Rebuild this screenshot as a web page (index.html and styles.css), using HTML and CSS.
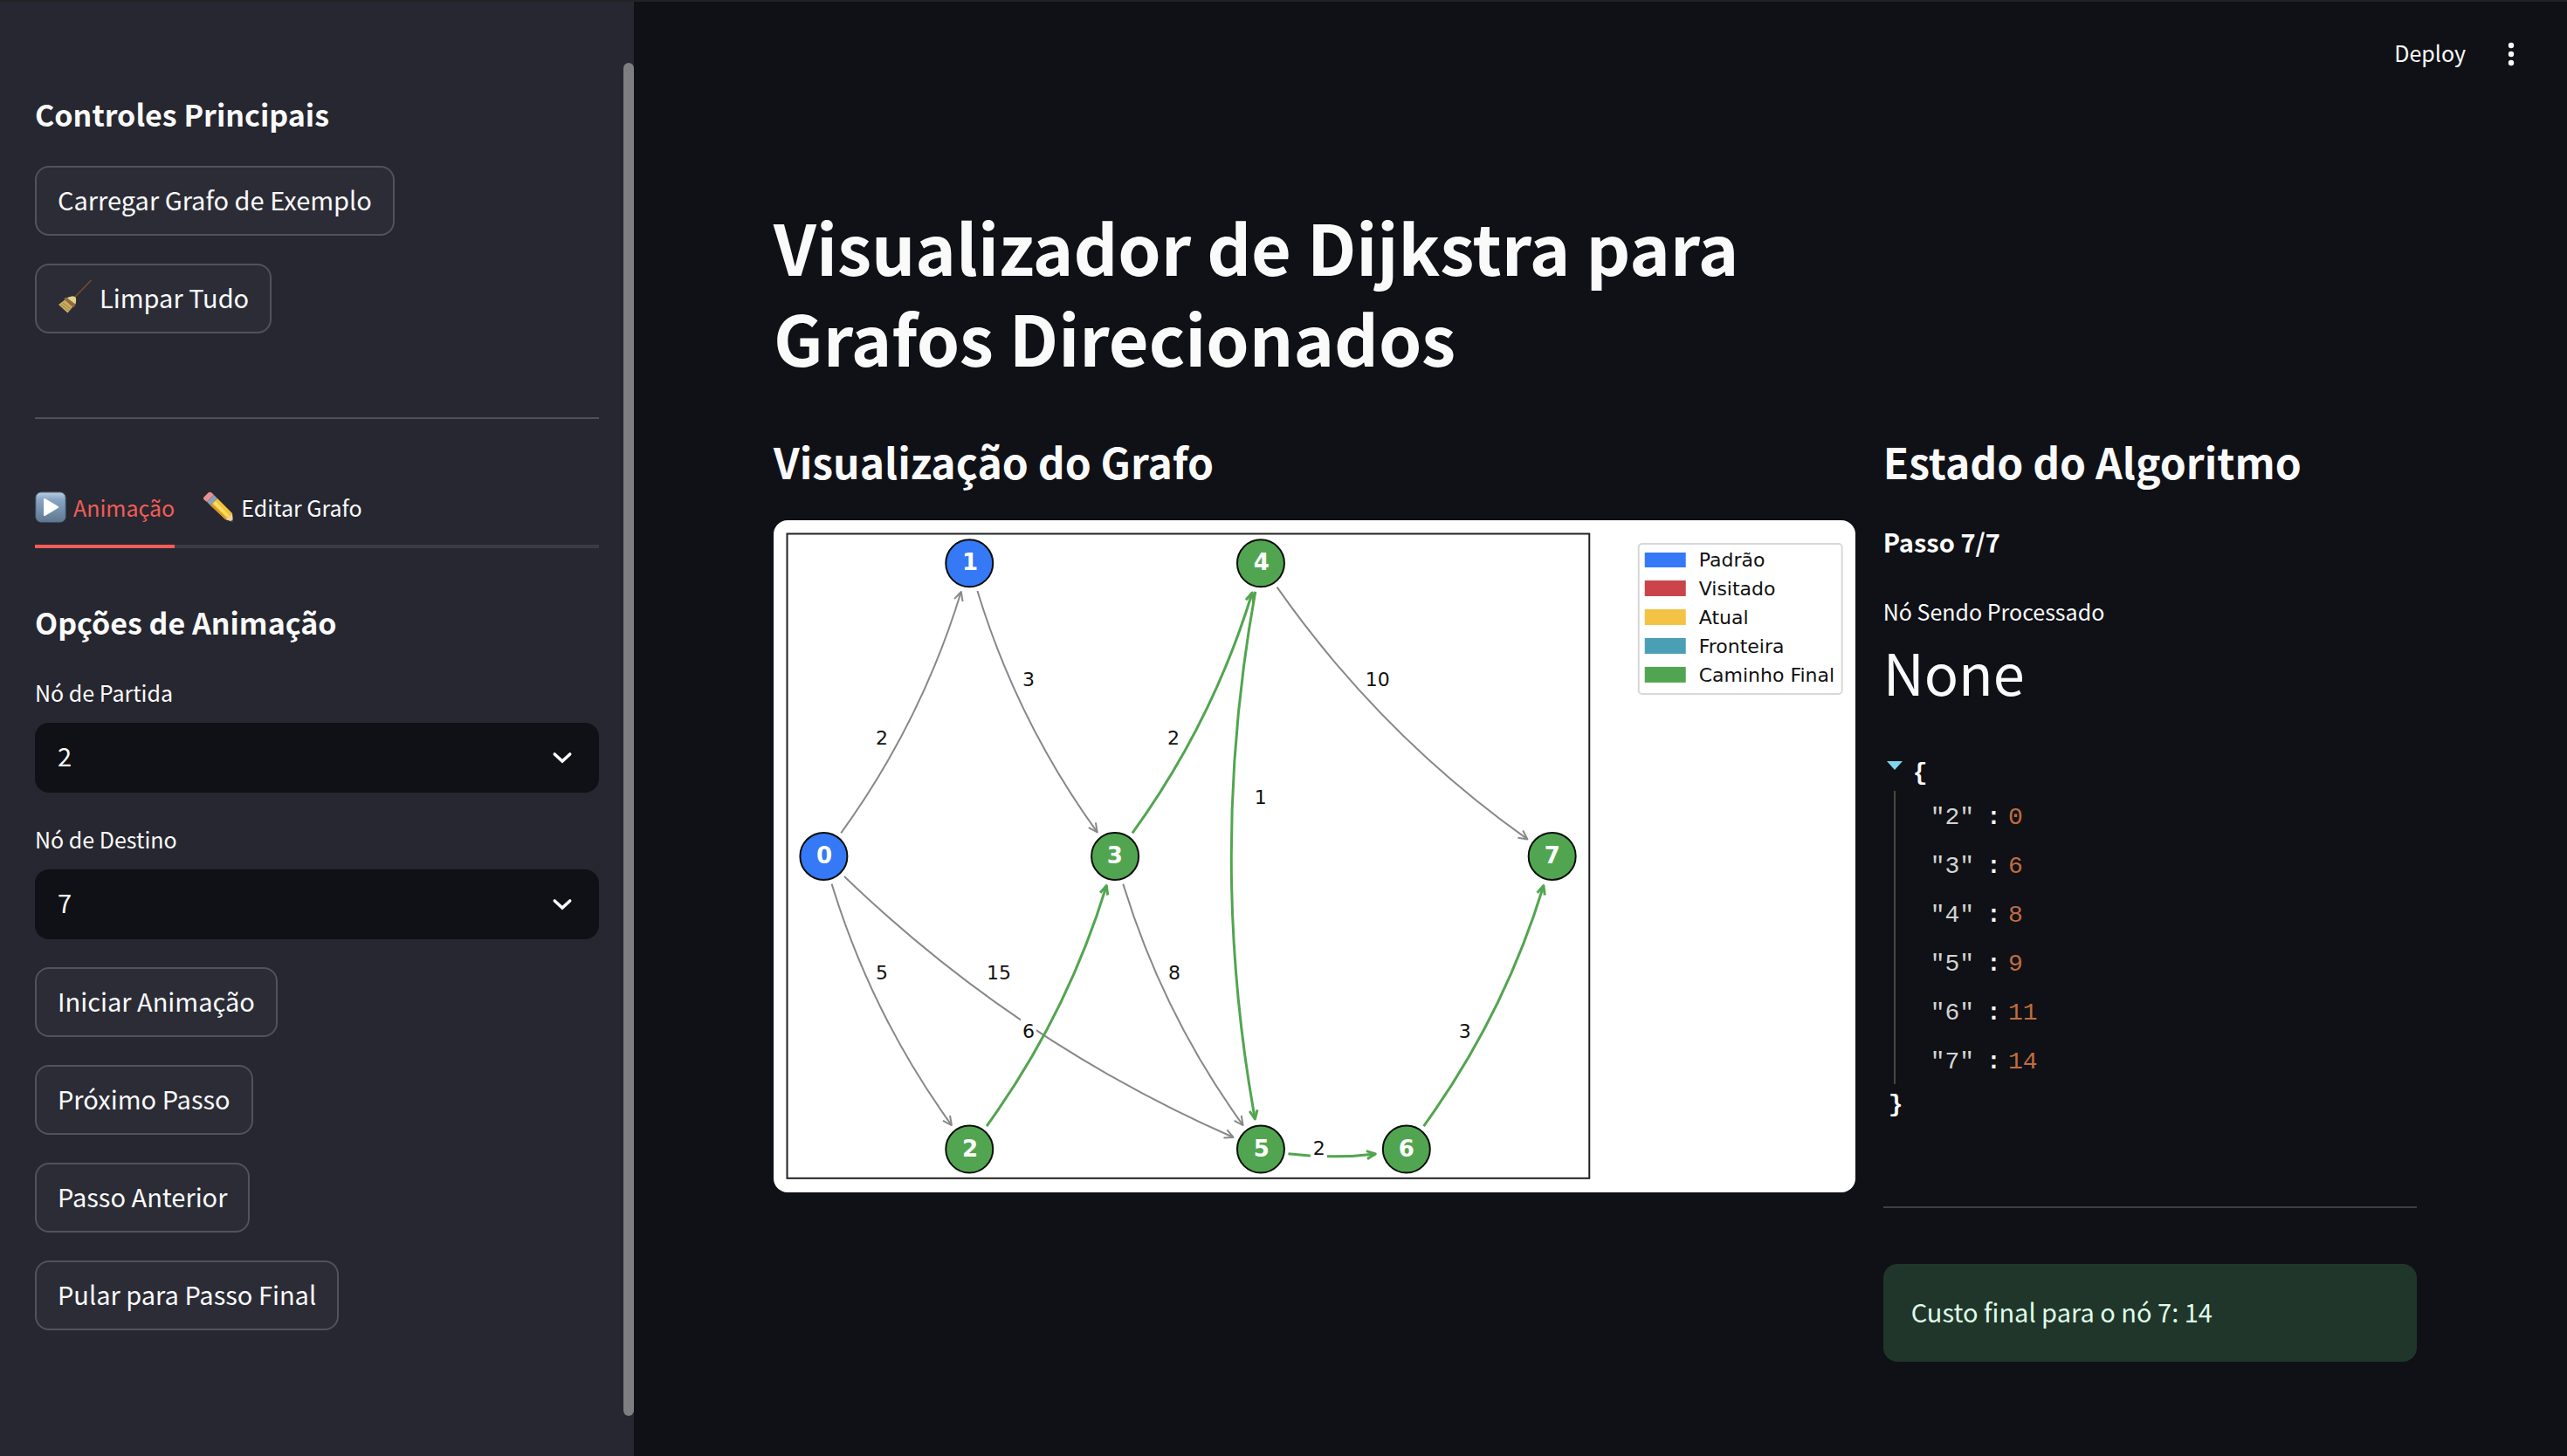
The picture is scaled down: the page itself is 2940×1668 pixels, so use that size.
FILE: index.html
```html
<!DOCTYPE html>
<html lang="pt-BR">
<head>
<meta charset="utf-8">
<title>Visualizador de Dijkstra</title>
<link rel="stylesheet" href="styles.css">
</head>
<body>
<div class="app">
  <aside class="sidebar">
    <div class="sidebar-content">
      <h3>Controles Principais</h3>
      <div class="stack">
        <button class="btn" type="button">Carregar Grafo de Exemplo</button>
        <button class="btn" type="button">
          <svg class="btn-icon" viewBox="0 0 40 40" aria-hidden="true">
            <path d="M20 20 38.500 1" stroke="#7a4f27" stroke-width="1.500" fill="none"/>
            <path d="M11.500 21Q16 18.500 20 20Q22 22.500 20.500 28L11.500 38.500 1 29Z" fill="#c8ab5f"/>
            <path d="M11.500 21Q16 18.500 20 20Q22 22.500 20.500 28L9 21.800Z" fill="#e3d08b"/>
            <path d="M7 22.500 10 20.500 20.800 29 18 32.500Z" fill="#8e6a3c"/>
            <path d="M4 29 13 36M6 27 15 34" stroke="#9f8343" stroke-width="1"/>
          </svg>
          Limpar Tudo
        </button>
      </div>
      <hr>
      <div class="tabs" role="tablist">
        <button class="tab active" type="button" role="tab" aria-selected="true">
          <svg class="tab-icon" viewBox="0 0 36 36" aria-hidden="true">
            <defs><linearGradient id="key" x1="0" y1="0" x2="0" y2="1"><stop offset="0" stop-color="#b9cde0"/><stop offset=".25" stop-color="#88a5c4"/><stop offset="1" stop-color="#5f7890"/></linearGradient></defs>
            <rect x="1" y="1" width="34" height="34" rx="6" fill="url(#key)" stroke="#58718a"/>
            <path d="M10 9Q10 7.500 11.500 8L26.500 17Q28 18 26.500 19L11.500 28Q10 28.500 10 27Z" fill="#fff"/>
          </svg>
          Animação
        </button>
        <button class="tab" type="button" role="tab" aria-selected="false">
          <svg class="tab-icon" viewBox="0 0 36 36" aria-hidden="true">
            <path d="M1 7 7 1Q10 0 13 4L5 12Q0 9 1 7Z" fill="#e8908f"/>
            <path d="M5 12 13 4 17 8 9 16Z" fill="#8ba0b8"/>
            <path d="M9 16 17 8 34 25 26 32Z" fill="#f2c33c"/>
            <path d="M12 13.500 14.500 11 31 28 29 30Z" fill="#fbdc63"/>
            <path d="M9 16 11 14 28 31 26 32Z" fill="#cf962b"/>
            <path d="M26 32 34 25 35 35Z" fill="#f0d29c"/>
            <path d="M32 34.200 34.700 32 35.500 35.500Z" fill="#44403c"/>
          </svg>
          Editar Grafo
        </button>
      </div>
      <h3>Opções de Animação</h3>
      <div class="stack">
        <div class="field">
          <label for="start">Nó de Partida</label>
          <div class="select">
            <select id="start"><option>2</option></select>
            <svg viewBox="0 0 24 24" aria-hidden="true"><path d="M4.500 8.500 12 15.500 19.500 8.500"/></svg>
          </div>
        </div>
        <div class="field">
          <label for="end">Nó de Destino</label>
          <div class="select">
            <select id="end"><option>7</option></select>
            <svg viewBox="0 0 24 24" aria-hidden="true"><path d="M4.500 8.500 12 15.500 19.500 8.500"/></svg>
          </div>
        </div>
        <button class="btn" type="button">Iniciar Animação</button>
        <button class="btn" type="button">Próximo Passo</button>
        <button class="btn" type="button">Passo Anterior</button>
        <button class="btn" type="button">Pular para Passo Final</button>
      </div>
    </div>
    <div class="scrollbar"></div>
  </aside>

  <div class="page">
    <header class="toolbar">
      <button class="deploy" type="button">Deploy</button>
      <button class="menu" type="button" aria-label="Menu">
        <svg viewBox="0 0 8 28"><circle cx="4" cy="4" r="3.200"/><circle cx="4" cy="14" r="3.200"/><circle cx="4" cy="24" r="3.200"/></svg>
      </button>
    </header>
    <main>
      <h1>Visualizador de Dijkstra para Grafos Direcionados</h1>
      <div class="columns">
        <section class="graph-column">
          <h2>Visualização do Grafo</h2>
          <svg class="graph" viewBox="0 0 1239 770" role="img" aria-label="Grafo direcionado">
            <defs>
              <marker id="head-gray" viewBox="-14 -8 16 16" markerWidth="16" markerHeight="16" markerUnits="userSpaceOnUse" orient="auto" overflow="visible"><path class="edge" d="M-10-5 0 0-10 5"/></marker>
              <marker id="head-green" viewBox="-14 -8 16 16" markerWidth="16" markerHeight="16" markerUnits="userSpaceOnUse" orient="auto" overflow="visible"><path class="edge-path" d="M-10-4.500 0 0-10 4.500"/></marker>
            </defs>
            <rect class="frame" x="15.500" y="15.500" width="919" height="738.500"/>
            <g class="edge">
              <path marker-end="url(#head-gray)" d="M77.200 358.500Q169.200 231.300 214.800 82"/>
              <path marker-end="url(#head-gray)" d="M233.500 81Q279.500 231.300 370.800 357.500"/>
              <path marker-end="url(#head-gray)" d="M66.600 416.700Q112.600 567 203.900 693.200"/>
              <path marker-end="url(#head-gray)" d="M400.400 416.700Q446.400 567 537.700 693.200"/>
              <path marker-end="url(#head-gray)" d="M576.700 76.700Q695.700 246.300 863.700 365.500"/>
              <path marker-end="url(#head-gray)" d="M81 408.200Q277.700 597.900 526.700 707.200"/>
            </g>
            <g class="edge-path">
              <path marker-end="url(#head-green)" d="M411 358.500Q503 231.300 548.300 83"/>
              <path marker-end="url(#head-green)" d="M244.100 694.200Q336.100 567 381.400 418.700"/>
              <path marker-end="url(#head-green)" d="M744.800 694.200Q836.800 567 882.100 418.700"/>
              <path marker-end="url(#head-green)" d="M551.900 81.800Q497.100 385 551.500 686.200"/>
              <path marker-end="url(#head-green)" d="M589.600 725.900Q641.600 732.100 689.500 726.100"/>
            </g>
            <g class="label-bg">
              <rect x="283" y="571" width="18" height="26"/>
              <rect x="615" y="706" width="19" height="26"/>
            </g>
            <g class="weight">
              <text x="124" y="257">2</text><text x="292" y="190">3</text>
              <text x="458" y="257">2</text><text x="558" y="325">1</text>
              <text x="692" y="190">10</text><text x="124" y="526">5</text>
              <text x="258" y="526">15</text><text x="292" y="593">6</text>
              <text x="459" y="526">8</text><text x="792" y="593">3</text>
              <text x="625" y="727">2</text>
            </g>
            <g class="node">
              <circle class="blue" cx="224.300" cy="49.300" r="27"/><circle class="blue" cx="57.400" cy="385" r="27"/>
              <circle class="green" cx="558.100" cy="49.300" r="27"/><circle class="green" cx="391.200" cy="385" r="27"/>
              <circle class="green" cx="891.900" cy="385" r="27"/><circle class="green" cx="224.300" cy="720.700" r="27"/>
              <circle class="green" cx="558.100" cy="720.700" r="27"/><circle class="green" cx="725" cy="720.700" r="27"/>
            </g>
            <g class="node-label">
              <text x="225" y="57">1</text><text x="58" y="393">0</text><text x="559" y="57">4</text><text x="391" y="393">3</text>
              <text x="892" y="393">7</text><text x="225" y="729">2</text><text x="559" y="729">5</text><text x="725" y="729">6</text>
            </g>
            <g>
              <rect class="legend-box" x="991" y="27" width="233" height="172" rx="4"/>
              <rect class="blue" x="998" y="37" width="47" height="17"/>
              <rect class="red" x="998" y="69" width="47" height="18"/>
              <rect class="yellow" x="998" y="102" width="47" height="18"/>
              <rect class="teal" x="998" y="135" width="47" height="18"/>
              <rect class="green" x="998" y="168" width="47" height="18"/>
            </g>
            <g class="legend-label">
              <text x="1060" y="53">Padrão</text><text x="1060" y="86">Visitado</text><text x="1060" y="119">Atual</text>
              <text x="1060" y="152">Fronteira</text><text x="1060" y="185">Caminho Final</text>
            </g>
          </svg>
        </section>
        <section class="state-column">
          <h2>Estado do Algoritmo</h2>
          <p class="step">Passo 7/7</p>
          <p class="metric-label">Nó Sendo Processado</p>
          <p class="metric-value">None</p>
          <div class="json">
            <div class="json-open"><svg viewBox="0 0 18 10" aria-hidden="true"><path d="M0 0H18L9 10Z"/></svg>{</div>
            <ul>
              <li><span class="key">"2"</span><b>:</b><span class="num">0</span></li>
              <li><span class="key">"3"</span><b>:</b><span class="num">6</span></li>
              <li><span class="key">"4"</span><b>:</b><span class="num">8</span></li>
              <li><span class="key">"5"</span><b>:</b><span class="num">9</span></li>
              <li><span class="key">"6"</span><b>:</b><span class="num">11</span></li>
              <li><span class="key">"7"</span><b>:</b><span class="num">14</span></li>
            </ul>
            <div class="json-close">}</div>
          </div>
          <hr>
          <div class="alert" role="status">Custo final para o nó 7: 14</div>
        </section>
      </div>
    </main>
  </div>
</div>
</body>
</html>
```
FILE: styles.css
```css
* { box-sizing: border-box; }

body {
  margin: 0;
  background: #0f1116;
  color: #fafafa;
  font-family: "Noto Sans CJK JP", "Noto Sans", sans-serif;
  font-size: 29px;
  line-height: 44px;
}

h1, h2, h3, p, ul { margin: 0; padding: 0; }
button, select { font: inherit; color: inherit; }
button { cursor: pointer; }

.app {
  display: flex;
  min-height: 100vh;
  border-top: 2px solid #222324;
}

/* Sidebar */
.sidebar {
  display: flex;
  flex: 0 0 726px;
  background: #262730;
}
.sidebar-content { flex: 1; padding: 104px 28px 104px 40px; }
.scrollbar {
  width: 12px;
  margin: 70px 0 46px;
  border-radius: 6px;
  background: #7d7d82;
}

h3 {
  margin-bottom: 34px;
  font-size: 34px;
  font-weight: 600;
  line-height: 50px;
}

.stack {
  display: flex;
  flex-direction: column;
  align-items: flex-start;
  gap: 32px;
}

.btn {
  display: flex;
  align-items: center;
  gap: 8px;
  padding: 14px 24px 18px;
  border: 2px solid #51525b;
  border-radius: 16px;
  background: #2b2c36;
}
.btn-icon { width: 40px; height: 40px; }

hr {
  height: 2px;
  margin: 96px 0 64px;
  border: 0;
  background: #4f5059;
}

.tabs {
  display: flex;
  gap: 32px;
  margin-bottom: 60px;
  box-shadow: inset 0 -4px #3a3b44;
}
.tab {
  display: flex;
  align-items: center;
  gap: 8px;
  height: 84px;
  padding: 0 0 6px;
  border: 0;
  border-bottom: 4px solid transparent;
  background: none;
  font-size: 25px;
}
.tab-icon { width: 36px; height: 36px; }
.tab.active { color: #f25c57; border-color: #f25c57; }

.field { align-self: stretch; }
.field label {
  display: block;
  margin-bottom: 14px;
  font-size: 25px;
  line-height: 42px;
}
.select { display: grid; align-items: center; }
.select > * { grid-area: 1 / 1; }
.select select {
  width: 100%;
  height: 80px;
  padding: 0 26px 6px;
  border: 0;
  border-radius: 16px;
  background: #0f1116;
  appearance: none;
}
.select svg {
  justify-self: end;
  width: 28px;
  height: 28px;
  margin-right: 28px;
  fill: none;
  stroke: #fafafa;
  stroke-width: 3;
  stroke-linecap: round;
  pointer-events: none;
}

/* Main area */
.page { flex: 1; min-width: 0; }
.toolbar {
  display: flex;
  align-items: center;
  justify-content: flex-end;
  gap: 48px;
  height: 120px;
  padding-right: 60px;
}
.toolbar button { padding: 0; border: 0; background: none; font-size: 25px; }
.toolbar .deploy { padding-bottom: 4px; }
.menu svg { display: block; width: 8px; height: 28px; fill: #fafafa; }

main { padding: 108px 172px 108px 160px; }
h1 {
  max-width: 1240px;
  margin-bottom: 60px;
  font-size: 79px;
  font-weight: 700;
  line-height: 104px;
}
h2 {
  margin-bottom: 38px;
  font-size: 48px;
  font-weight: 600;
  line-height: 60px;
}

.columns { display: flex; gap: 32px; }
.graph-column { flex: 1 1 calc(66.667% - 32px); min-width: 0; }
.state-column { flex: 1 1 calc(33.333% - 32px); min-width: 0; }

/* Graph */
.graph {
  display: block;
  width: 100%;
  border-radius: 16px;
  background: #fff;
  font-family: "DejaVu Sans", sans-serif;
}
.frame { fill: none; stroke: #222; stroke-width: 2; }
.edge { fill: none; stroke: #888; stroke-width: 2; stroke-linejoin: round; }
.edge-path { fill: none; stroke: #52a550; stroke-width: 3; stroke-linejoin: round; }
.label-bg { fill: #fff; }
.weight { font-size: 22px; text-anchor: middle; fill: #111; }
.node circle { stroke: #0c0f0c; stroke-width: 2; }
.node-label { font-size: 26px; font-weight: 700; text-anchor: middle; fill: #fff; }
.legend-box { fill: #fff; stroke: #d8d8d8; stroke-width: 2; }
.legend-label { font-size: 22px; fill: #111; }
.blue { fill: #3579f6; }
.green { fill: #52a550; }
.red { fill: #cb444a; }
.yellow { fill: #f4c244; }
.teal { fill: #4a9fb5; }

/* Algorithm state */
.step { margin-bottom: 36px; font-weight: 700; line-height: 48px; }
.metric-label { font-size: 25px; line-height: 40px; }
.metric-value { font-size: 65px; line-height: 98px; }

.json {
  margin-top: 52px;
  font-family: "Liberation Mono", monospace;
  font-size: 28px;
  line-height: 32px;
}
.json-open, .json-close { font-weight: 700; }
.json-open { display: flex; gap: 12px; padding-left: 4px; }
.json-open svg { width: 18px; height: 10px; margin-top: 2px; fill: #7fd5ee; }
.json-close { padding-left: 6px; }
.json ul {
  margin: 4px 0 8px 12px;
  padding-left: 40px;
  border-left: 2px solid #49483e;
  list-style: none;
}
.json li { display: flex; padding-top: 6px; line-height: 50px; }
.key { margin-right: 14px; color: #d4d3d0; }
.json b { margin-right: 8px; color: #f9f8f5; }
.num { color: #c06c3f; }

.state-column hr { margin: 100px 0 64px; background: #3e3f44; }
.alert {
  padding: 32px 32px 36px;
  border-radius: 16px;
  background: #21362a;
  color: #dffde9;
}
```
